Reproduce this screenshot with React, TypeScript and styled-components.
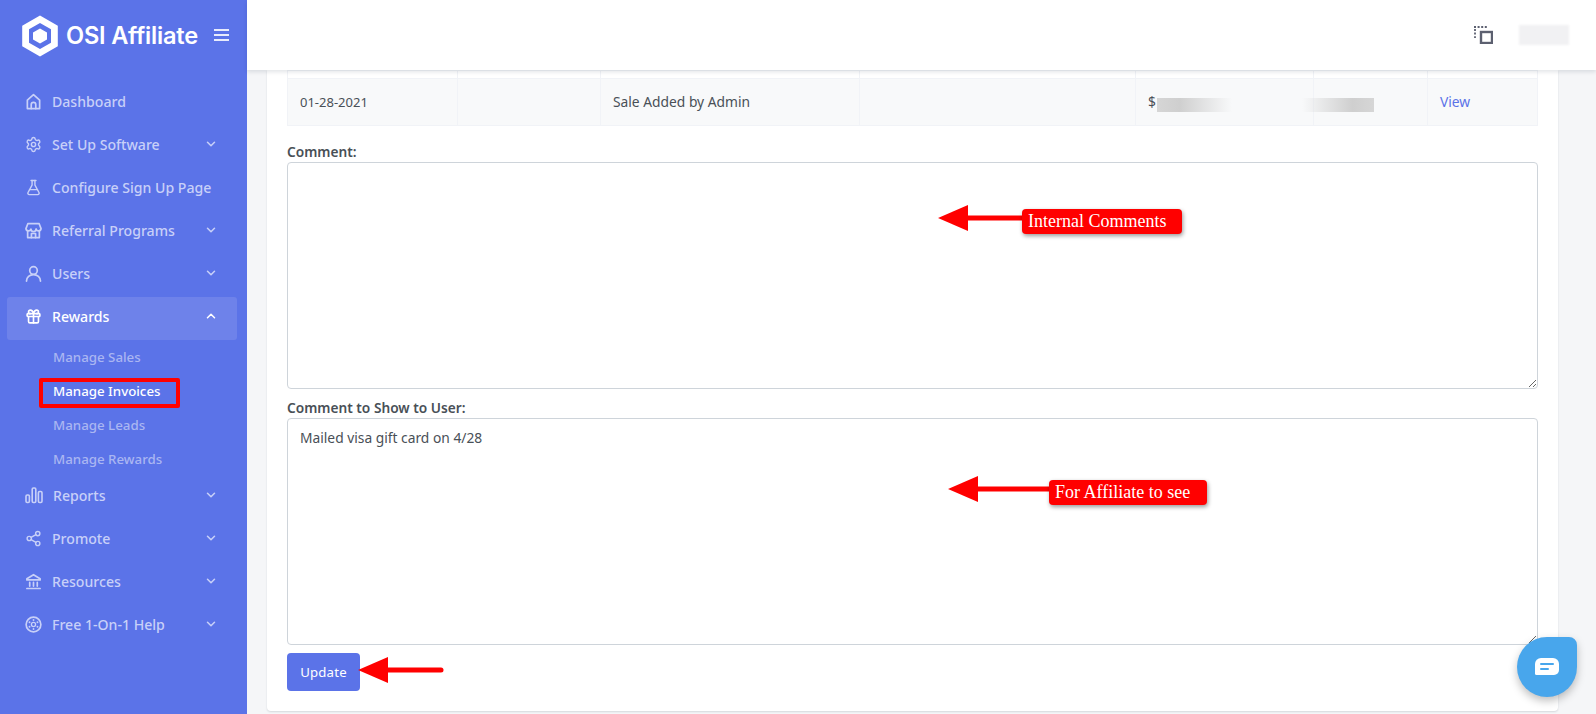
// App.tsx
import React from 'react';
import styled, { createGlobalStyle } from 'styled-components';
import { Settings, FlaskConical, Gift, Share2, ChevronDown, ChevronUp } from 'lucide-react';

const GlobalStyle = createGlobalStyle`
  html, body {
    margin: 0;
    height: 100%;
    overflow: hidden;
    background: #f5f6f8;
    font-family: "Noto Sans", "Liberation Sans", sans-serif;
    color: #495057;
  }
  * { box-sizing: border-box; }
`;

const Page = styled.div`
  display: grid;
  grid-template-columns: 247px 1fr;
  width: 1596px;
  height: 714px;
  overflow: hidden;
  position: relative;
`;

const Sidebar = styled.aside`
  background: #5b73e8;
  display: flex;
  flex-direction: column;
`;

const Brand = styled.div`
  height: 82px;
  padding: 15px 18px 0 22px;
  display: flex;
  align-items: flex-start;
`;

const BrandName = styled.span`
  font-family: Inter, sans-serif;
  font-weight: 600;
  font-size: 23.6px;
  line-height: 42px;
  letter-spacing: -0.2px;
  color: #fff;
  margin-left: 8px;
  white-space: nowrap;
`;

const Burger = styled.div`
  margin: 14px 0 0 auto;
  width: 15px;
  height: 12px;
  border-top: 2px solid #e8ebfc;
  border-bottom: 2px solid #e8ebfc;
  position: relative;
  &::after {
    content: '';
    position: absolute;
    left: 0;
    right: 0;
    top: 3px;
    height: 2px;
    background: #e8ebfc;
  }
`;

const NavItem = styled.div<{ $active?: boolean }>`
  height: 43px;
  margin: 0 10px 0 7px;
  padding: 0 19px 5px 18px;
  display: flex;
  align-items: center;
  border-radius: 3px;
  background: ${(p) => (p.$active ? '#6e82ea' : 'transparent')};
  color: ${(p) => (p.$active ? '#ffffff' : '#c8d0f8')};
  font-size: 14.1px;
  font-weight: 500;
  svg { flex: none; }
`;

const NavLabel = styled.span`
  margin-left: 10px;
  flex: 1;
  white-space: nowrap;
`;

const SubItem = styled.div<{ $active?: boolean }>`
  height: 34px;
  padding: 0 0 1px 53px;
  display: flex;
  align-items: center;
  position: relative;
  font-size: 13.3px;
  font-weight: 500;
  color: ${(p) => (p.$active ? '#ffffff' : '#aab6f2')};
  ${(p) =>
    p.$active &&
    `&::after {
      content: '';
      box-sizing: border-box;
      position: absolute;
      left: 39px;
      top: 4px;
      width: 141px;
      height: 30px;
      border: 4px solid #ff0000;
      border-radius: 2px;
    }`}
`;

const Main = styled.main`
  display: flex;
  flex-direction: column;
  min-width: 0;
`;

const Topbar = styled.header`
  height: 70px;
  flex: none;
  background: #fff;
  box-shadow: 0 2px 4px rgba(15, 34, 58, 0.12);
  position: relative;
  z-index: 2;
  display: flex;
  align-items: center;
  justify-content: flex-end;
  padding: 0 27px 0 0;
`;

const BlurName = styled.div`
  width: 50px;
  height: 20px;
  margin-left: 26px;
  margin-top: -1px;
  background: #f1f1f3;
  filter: blur(1px);
`;

const Content = styled.div`
  flex: 1;
  padding: 0 39px 3px 20px;
  display: flex;
  min-height: 0;
`;

const Card = styled.section`
  flex: 1;
  background: #fff;
  border-radius: 0 0 4px 4px;
  box-shadow: 0 1px 2px rgba(15, 34, 58, 0.14);
  padding: 0 20px;
`;

const Table = styled.table`
  width: 1250px;
  border-collapse: collapse;
  table-layout: fixed;
  font-size: 13.8px;
`;

const Cell = styled.td<{ $w?: number }>`
  width: ${(p) => (p.$w ? `${p.$w}px` : 'auto')};
  border: 1px solid #f1f3f7;
  padding: 0 12px 1px;
  position: relative;
  white-space: nowrap;
`;

const DateText = styled.span`
  font-size: 13px;
`;

const SpacerRow = styled.tr`
  height: 8px;
`;

const StripedRow = styled.tr`
  height: 47px;
  background: #f8f9fa;
`;

const ViewLink = styled.a`
  color: #5b73e8;
`;

const Smudge = styled.span<{ $flip?: boolean }>`
  position: absolute;
  top: 19px;
  height: 14px;
  width: ${(p) => (p.$flip ? '72px' : '75px')};
  left: ${(p) => (p.$flip ? '-12px' : '21px')};
  background: linear-gradient(${(p) => (p.$flip ? '90deg' : '270deg')}, rgba(204, 204, 204, 0), #cfcfcf 70%, #d6d6d6);
`;

const Field = styled.div<{ $gap?: number }>`
  position: relative;
  margin-top: ${(p) => p.$gap ?? 14}px;
`;

const FieldLabel = styled.label`
  display: block;
  padding-top: 1px;
  font-size: 13.7px;
  font-weight: 600;
  line-height: 21px;
  color: #495057;
`;

const TextBox = styled.textarea`
  display: block;
  width: 100%;
  height: 227px;
  border: 1px solid #ced4da;
  border-radius: 4px;
  padding: 9px 12px;
  font: inherit;
  font-size: 13.8px;
  line-height: 20px;
  color: #495057;
  outline: none;
`;

const Callout = styled.div<{ $x: number; $y: number }>`
  position: absolute;
  left: ${(p) => p.$x}px;
  top: ${(p) => p.$y}px;
  display: flex;
  align-items: flex-start;
`;

const CalloutLabel = styled.div<{ $w: number }>`
  width: ${(p) => p.$w}px;
  height: 25px;
  margin-top: 4px;
  padding-left: 6px;
  background: #ff0000;
  border-radius: 4px;
  box-shadow: 1px 2px 4px rgba(0, 0, 0, 0.4);
  color: #fff;
  font-family: "Liberation Serif", serif;
  font-size: 18px;
  line-height: 24px;
  white-space: nowrap;
`;

const ActionRow = styled.div`
  display: flex;
  align-items: center;
  margin-top: 8px;
  svg { margin: 0 0 4px -2px; }
`;

const UpdateButton = styled.button`
  width: 73px;
  height: 38px;
  border: none;
  border-radius: 4px;
  background: #5b73e8;
  color: #fff;
  font: inherit;
  font-size: 13.2px;
  letter-spacing: 0.2px;
`;

const ChatBubble = styled.div`
  position: absolute;
  left: 1517px;
  top: 637px;
  width: 60px;
  height: 60px;
  border-radius: 50% 8px 50% 50%;
  background: #48a6ec;
  box-shadow: 0 4px 8px rgba(0, 0, 0, 0.25);
  z-index: 3;
  display: flex;
  align-items: center;
  justify-content: center;
`;

const Logo = () => (
  <svg width="36" height="42" viewBox="0 0 36 42">
    <path fillRule="evenodd" fill="#fff" d="M18 0.5 35.8 10.7 35.8 31.3 18 41.5 0.2 31.3 0.2 10.7ZM18 8 7 14.3 7 27.7 18 34 29 27.7 29 14.3Z" />
    <path fill="#fff" d="M18 13.5 25 17.4 25 24.6 18 28.5 11 24.6 11 17.4Z" />
  </svg>
);

const Glyph = ({ children }: { children: React.ReactNode }) => (
  <svg width="17" height="17" viewBox="0 0 18 18" fill="none" stroke="currentColor" strokeWidth="1.8" strokeLinecap="round" strokeLinejoin="round">
    {children}
  </svg>
);

const HomeIcon = () => (
  <Glyph>
    <path d="M2.5 16.5V7.6L9 1.8l6.5 5.8v8.9Z" />
    <path d="M6.6 16.5v-4.2a2.4 2.4 0 0 1 4.8 0v4.2" />
  </Glyph>
);

const StoreIcon = () => (
  <Glyph>
    <path d="M3 1.8h12l2 5.2a2.7 2.7 0 0 1-5.3.4 2.7 2.7 0 0 1-5.4 0A2.7 2.7 0 0 1 1 7Z" />
    <path d="M2.8 10v6.5h12.4V10" />
    <path d="M6.8 16.5v-4.3h4.4v4.3" />
  </Glyph>
);

const UserIcon = () => (
  <Glyph>
    <circle cx="9" cy="5.8" r="4" />
    <path d="M1.6 17c0-4 3.3-6.8 7.4-6.8s7.4 2.8 7.4 6.8" />
  </Glyph>
);

const BarsIcon = () => (
  <svg width="18" height="18" viewBox="0 0 18 18" fill="none" stroke="currentColor" strokeWidth="1.6">
    <rect x="1" y="9" width="3.4" height="7.5" rx="1.2" />
    <rect x="7.2" y="2" width="3.6" height="14.5" rx="1.2" />
    <rect x="13.4" y="5.5" width="3.6" height="11" rx="1.2" />
  </svg>
);

const BankIcon = () => (
  <Glyph>
    <path d="M2 6 9 1.8 16 6v1.3H2Z" />
    <path d="M5 10v3.8M9 10v3.8M13 10v3.8" />
    <path d="M2 16.4h14" />
  </Glyph>
);

const HelpIcon = () => (
  <Glyph>
    <circle cx="9" cy="9" r="7.8" />
    <circle cx="9" cy="9" r="2.2" strokeWidth="1.4" />
    <circle cx="9" cy="4.2" r="1" fill="currentColor" stroke="none" />
    <circle cx="9" cy="13.8" r="1" fill="currentColor" stroke="none" />
    <circle cx="4.8" cy="6.6" r="1" fill="currentColor" stroke="none" />
    <circle cx="13.2" cy="6.6" r="1" fill="currentColor" stroke="none" />
    <circle cx="4.8" cy="11.4" r="1" fill="currentColor" stroke="none" />
    <circle cx="13.2" cy="11.4" r="1" fill="currentColor" stroke="none" />
  </Glyph>
);

const CopyDashedIcon = () => (
  <svg width="19" height="18" viewBox="0 0 19 18" fill="none" stroke="#5c6070">
    <path d="M0 1h13" strokeWidth="1.8" strokeDasharray="2 1.6" />
    <path d="M1 3v9" strokeWidth="1.8" strokeDasharray="2 1.6" />
    <rect x="7" y="6" width="11" height="11" strokeWidth="2.4" />
  </svg>
);

const Arrow = ({ width, thick = 5, round }: { width: number; thick?: number; round?: boolean }) => (
  <svg width={width} height="26" viewBox={`0 0 ${width} 26`}>
    <path d="M0 13 30 0V26Z" fill="#ff0000" />
    <line x1="28" y1="13" x2={round ? width - 3 : width} y2="13" stroke="#ff0000" strokeWidth={thick} strokeLinecap={round ? 'round' : 'butt'} />
  </svg>
);

const ChatGlyph = () => (
  <svg width="24" height="18" viewBox="0 0 24 18">
    <path fill="#fff" d="M6 0H18A6 6 0 0 1 24 6V12A5 5 0 0 1 19 17H1.5A1.5 1.5 0 0 1 0 15.5V6A6 6 0 0 1 6 0Z" />
    <rect x="5" y="5" width="14" height="2" rx="1" fill="#48a6ec" />
    <rect x="5" y="10" width="9" height="2" rx="1" fill="#48a6ec" />
  </svg>
);

const icon = { size: 17, strokeWidth: 2 };
const down = <ChevronDown size={14} strokeWidth={2.6} />;

const App: React.FC = () => {
  return (
    <Page>
      <GlobalStyle />
      <Sidebar>
        <Brand>
          <Logo />
          <BrandName>OSI Affiliate</BrandName>
          <Burger />
        </Brand>
        <NavItem><HomeIcon /><NavLabel>Dashboard</NavLabel></NavItem>
        <NavItem><Settings {...icon} /><NavLabel>Set Up Software</NavLabel>{down}</NavItem>
        <NavItem><FlaskConical {...icon} /><NavLabel>Configure Sign Up Page</NavLabel></NavItem>
        <NavItem><StoreIcon /><NavLabel>Referral Programs</NavLabel>{down}</NavItem>
        <NavItem><UserIcon /><NavLabel>Users</NavLabel>{down}</NavItem>
        <NavItem $active><Gift {...icon} strokeWidth={2.3} /><NavLabel>Rewards</NavLabel><ChevronUp size={14} strokeWidth={2.6} /></NavItem>
        <SubItem>Manage Sales</SubItem>
        <SubItem $active>Manage Invoices</SubItem>
        <SubItem>Manage Leads</SubItem>
        <SubItem>Manage Rewards</SubItem>
        <NavItem><BarsIcon /><NavLabel>Reports</NavLabel>{down}</NavItem>
        <NavItem><Share2 {...icon} /><NavLabel>Promote</NavLabel>{down}</NavItem>
        <NavItem><BankIcon /><NavLabel>Resources</NavLabel>{down}</NavItem>
        <NavItem><HelpIcon /><NavLabel>Free 1-On-1 Help</NavLabel>{down}</NavItem>
      </Sidebar>
      <Main>
        <Topbar>
          <CopyDashedIcon />
          <BlurName />
        </Topbar>
        <Content>
          <Card>
            <Table>
              <tbody>
                <SpacerRow>
                  <Cell $w={170} /><Cell $w={143} /><Cell $w={259} /><Cell $w={276} /><Cell $w={178} /><Cell $w={114} /><Cell $w={110} />
                </SpacerRow>
                <StripedRow>
                  <Cell><DateText>01-28-2021</DateText></Cell>
                  <Cell />
                  <Cell>Sale Added by Admin</Cell>
                  <Cell />
                  <Cell>$<Smudge /></Cell>
                  <Cell><Smudge $flip /></Cell>
                  <Cell><ViewLink>View</ViewLink></Cell>
                </StripedRow>
              </tbody>
            </Table>
            <Field>
              <FieldLabel>Comment:</FieldLabel>
              <TextBox defaultValue="" />
              <Callout $x={651} $y={65}>
                <Arrow width={84} />
                <CalloutLabel $w={160}>Internal Comments</CalloutLabel>
              </Callout>
            </Field>
            <Field $gap={7}>
              <FieldLabel>Comment to Show to User:</FieldLabel>
              <TextBox defaultValue="Mailed visa gift card on 4/28" />
              <Callout $x={661} $y={80}>
                <Arrow width={101} />
                <CalloutLabel $w={158}>For Affiliate to see</CalloutLabel>
              </Callout>
            </Field>
            <ActionRow>
              <UpdateButton>Update</UpdateButton>
              <Arrow width={86} round />
            </ActionRow>
          </Card>
        </Content>
      </Main>
      <ChatBubble><ChatGlyph /></ChatBubble>
    </Page>
  );
};

export default App;
